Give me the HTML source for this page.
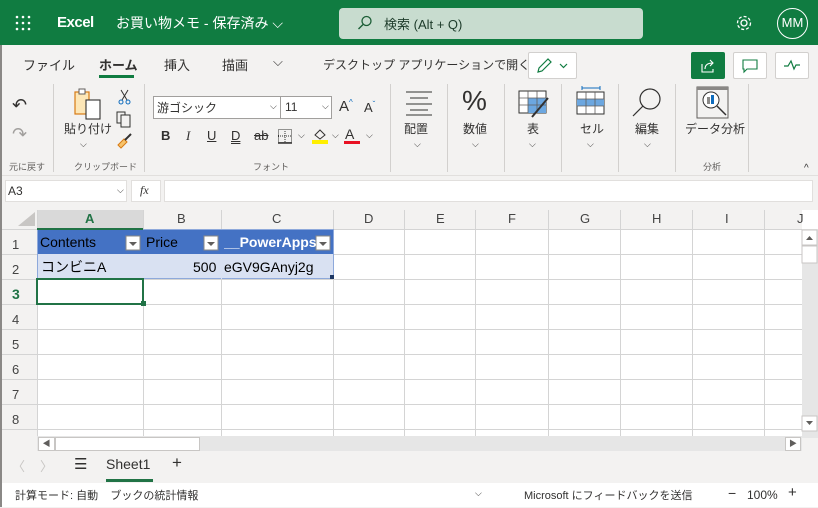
<!DOCTYPE html>
<html><head><meta charset="utf-8"><style>
*{margin:0;padding:0;box-sizing:border-box}
body{width:818px;height:507px;overflow:hidden;position:relative;background:#f3f2f1;font-family:"Liberation Sans","Noto Sans CJK JP",sans-serif;color:#323130}
.a{position:absolute;white-space:nowrap}
.t{font-size:12px}
.vsep{position:absolute;width:1px;background:#d2d0ce}
.lbl{font-size:12px;color:#323130;text-align:center}
.grp{font-size:9px;color:#605e5c}
.chev{font-size:9px;color:#323130}
</style></head><body>
<div class="a" style="left:0;top:0;width:818px;height:45px;background:#107c41"></div>
<svg class="a" style="left:15px;top:15px" width="16" height="16"><g fill="#fff"><circle cx="2" cy="2" r="1.3"/><circle cx="8" cy="2" r="1.3"/><circle cx="14" cy="2" r="1.3"/><circle cx="2" cy="8" r="1.3"/><circle cx="8" cy="8" r="1.3"/><circle cx="14" cy="8" r="1.3"/><circle cx="2" cy="14" r="1.3"/><circle cx="8" cy="14" r="1.3"/><circle cx="14" cy="14" r="1.3"/></g></svg>
<div class="a" style="left:57px;top:14px;color:#fff;font-size:15px;font-weight:bold;letter-spacing:-0.5px">Excel</div>
<div class="a" style="left:116px;top:13px;color:#fff;font-size:14px">お買い物メモ - 保存済み ⌵</div>
<div class="a" style="left:339px;top:8px;width:304px;height:31px;background:#c8dccf;border-radius:4px"></div>
<svg class="a" style="left:357px;top:15px" width="16" height="16"><circle cx="9.5" cy="6" r="4.5" fill="none" stroke="#1b5e36" stroke-width="1.3"/><path d="M6.3 9.3 L1.5 14" stroke="#1b5e36" stroke-width="1.4"/></svg>
<div class="a" style="left:384px;top:14px;font-size:13px;color:#1d3b2a">検索 (Alt + Q)</div>
<svg class="a" style="left:735px;top:14px" width="18" height="18"><circle cx="9" cy="9" r="3" fill="none" stroke="#fff" stroke-width="1.3"/><circle cx="9" cy="9" r="6.5" fill="none" stroke="#fff" stroke-width="1.3" stroke-dasharray="3 2"/></svg>
<div class="a" style="left:777px;top:8px;width:31px;height:31px;border:1.5px solid #fff;border-radius:50%;color:#fff;font-size:13px;text-align:center;line-height:28px">MM</div>
<div class="a" style="left:0;top:45px;width:2px;height:462px;background:#8a8886"></div>
<div class="a" style="left:23px;top:55px;font-size:13px">ファイル</div>
<div class="a" style="left:99px;top:55px;font-size:13px;font-weight:bold">ホーム</div>
<div class="a" style="left:99px;top:75px;width:35px;height:3px;background:#107c41"></div>
<div class="a" style="left:164px;top:55px;font-size:13px">挿入</div>
<div class="a" style="left:222px;top:55px;font-size:13px">描画</div>
<div class="a" style="left:273px;top:54px;font-size:13px">⌵</div>
<div class="a" style="left:323px;top:56px;font-size:12px">デスクトップ アプリケーションで開く</div>
<div class="a" style="left:528px;top:52px;width:49px;height:27px;background:#fff;border:1px solid #d2d0ce;border-radius:2px"></div>
<svg class="a" style="left:535px;top:57px" width="36" height="18"><path d="M3 15 L4 11 L13 2 L16 5 L7 14 Z" fill="none" stroke="#107c41" stroke-width="1.2"/><path d="M25 7 L28.5 10.5 L32 7" fill="none" stroke="#107c41" stroke-width="1.2"/></svg>
<div class="a" style="left:691px;top:52px;width:34px;height:27px;background:#107c41;border-radius:2px"></div>
<svg class="a" style="left:699px;top:57px" width="18" height="18"><path d="M3 7 V15 H14 V12" fill="none" stroke="#fff" stroke-width="1.1"/><path d="M6 12 C6 8 9 6 14 6 M11 3 L14 6 L11 9" fill="none" stroke="#fff" stroke-width="1.1"/></svg>
<div class="a" style="left:733px;top:52px;width:34px;height:27px;background:#fff;border:1px solid #d2d0ce;border-radius:2px"></div>
<svg class="a" style="left:741px;top:57px" width="18" height="18"><path d="M2 3 H16 V12 H6 L3 15 V12 H2 Z" fill="none" stroke="#107c41" stroke-width="1.1"/></svg>
<div class="a" style="left:775px;top:52px;width:34px;height:27px;background:#fff;border:1px solid #d2d0ce;border-radius:2px"></div>
<svg class="a" style="left:783px;top:58px" width="18" height="14"><path d="M1 8 H5 L8 3 L11 11 L13 7 H17" fill="none" stroke="#107c41" stroke-width="1.2"/></svg>
<div class="vsep" style="left:53px;top:84px;height:88px"></div>
<div class="vsep" style="left:144px;top:84px;height:88px"></div>
<div class="vsep" style="left:390px;top:84px;height:88px"></div>
<div class="vsep" style="left:447px;top:84px;height:88px"></div>
<div class="vsep" style="left:504px;top:84px;height:88px"></div>
<div class="vsep" style="left:561px;top:84px;height:88px"></div>
<div class="vsep" style="left:618px;top:84px;height:88px"></div>
<div class="vsep" style="left:675px;top:84px;height:88px"></div>
<div class="vsep" style="left:748px;top:84px;height:88px"></div>
<div class="a" style="left:12px;top:95px;font-size:18px">↶</div>
<div class="a" style="left:12px;top:124px;font-size:18px;color:#a19f9d">↷</div>
<div class="a grp" style="left:9px;top:160px">元に戻す</div>
<svg class="a" style="left:70px;top:86px" width="36" height="36"><rect x="5" y="6" width="14" height="22" fill="#fde7b7" stroke="#d87b14" stroke-width="1.2"/><rect x="9" y="3" width="6" height="5" fill="#fff" stroke="#605e5c"/><rect x="16" y="14" width="14" height="19" fill="#fff" stroke="#323130" stroke-width="1.1"/></svg>
<div class="a" style="left:64px;top:120px;font-size:12px">貼り付け</div>
<div class="a chev" style="left:80px;top:139px">⌵</div>
<svg class="a" style="left:117px;top:88px" width="16" height="18"><path d="M4 2 L10 12 M11 2 L5 12" stroke="#323130"/><circle cx="4" cy="14" r="2" fill="none" stroke="#0f6cbd"/><circle cx="11" cy="14" r="2" fill="none" stroke="#0f6cbd"/></svg>
<svg class="a" style="left:116px;top:110px" width="16" height="18"><rect x="1" y="2" width="8" height="11" fill="none" stroke="#323130"/><rect x="5" y="5" width="9" height="12" fill="#f3f2f1" stroke="#323130"/></svg>
<svg class="a" style="left:116px;top:133px" width="18" height="16"><path d="M2 12 L8 6 L11 9 L5 15 Z" fill="#f7c36a" stroke="#d87b14"/><path d="M9 7 L15 1" stroke="#323130" stroke-width="2"/></svg>
<div class="a grp" style="left:74px;top:160px">クリップボード</div>
<div class="a" style="left:153px;top:96px;width:128px;height:23px;background:#fff;border:1px solid #a19f9d"></div>
<div class="a" style="left:157px;top:99px;font-size:12px">游ゴシック</div>
<div class="a chev" style="left:270px;top:101px">⌵</div>
<div class="a" style="left:280px;top:96px;width:52px;height:23px;background:#fff;border:1px solid #a19f9d"></div>
<div class="a" style="left:285px;top:100px;font-size:12px">11</div>
<div class="a chev" style="left:322px;top:101px">⌵</div>
<div class="a" style="left:339px;top:98px;font-size:15px">A<span style="font-size:8px;color:#0f6cbd;vertical-align:top">^</span></div>
<div class="a" style="left:364px;top:100px;font-size:13px">A<span style="font-size:8px;color:#0f6cbd;vertical-align:top">ˇ</span></div>
<div class="a" style="left:161px;top:128px;font-size:13px;font-weight:bold">B</div>
<div class="a" style="left:186px;top:128px;font-size:13px;font-style:italic;font-family:'Liberation Serif',serif">I</div>
<div class="a" style="left:207px;top:128px;font-size:13px;text-decoration:underline">U</div>
<div class="a" style="left:231px;top:128px;font-size:13px;text-decoration:underline double">D</div>
<div class="a" style="left:254px;top:128px;font-size:13px;text-decoration:line-through">ab</div>
<svg class="a" style="left:277px;top:128px" width="16" height="16"><rect x="1.5" y="1.5" width="13" height="13" fill="none" stroke="#323130" stroke-dasharray="1 1"/><path d="M8 1 V15 M1 8 H15" stroke="#323130" stroke-dasharray="1 1"/><path d="M1 15 H15" stroke="#323130" stroke-width="1.5"/></svg>
<div class="a chev" style="left:298px;top:130px">⌵</div>
<svg class="a" style="left:311px;top:126px" width="18" height="18"><path d="M4 9 L9 4 L14 9 L9 13 Z" fill="none" stroke="#323130"/><rect x="1" y="14" width="16" height="4" fill="#ffef00"/></svg>
<div class="a chev" style="left:332px;top:130px">⌵</div>
<div class="a" style="left:345px;top:126px;font-size:14px">A</div>
<div class="a" style="left:344px;top:141px;width:16px;height:3px;background:#e81123"></div>
<div class="a chev" style="left:366px;top:130px">⌵</div>
<div class="a grp" style="left:253px;top:160px">フォント</div>
<svg class="a" style="left:404px;top:90px" width="30" height="26"><path d="M2 2 H28 M6 8 H24 M2 14 H28 M6 20 H24 M2 25 H28" stroke="#323130" stroke-width="1"/></svg>
<div class="a lbl" style="left:404px;top:120px">配置</div>
<div class="a chev" style="left:414px;top:139px">⌵</div>
<div class="a" style="left:462px;top:85px;font-size:28px;font-weight:300">%</div>
<div class="a lbl" style="left:463px;top:120px">数値</div>
<div class="a chev" style="left:472px;top:139px">⌵</div>
<svg class="a" style="left:518px;top:90px" width="32" height="30"><rect x="1" y="1" width="27" height="22" fill="#fff" stroke="#323130"/><rect x="10" y="8" width="18" height="15" fill="#6ca7e0"/><path d="M1 8 H28 M1 15 H28 M10 1 V23 M19 1 V23" stroke="#605e5c" stroke-width="0.8"/><path d="M14 27 L30 8" stroke="#323130" stroke-width="2"/></svg>
<div class="a lbl" style="left:527px;top:120px">表</div>
<div class="a chev" style="left:529px;top:139px">⌵</div>
<svg class="a" style="left:576px;top:86px" width="30" height="30"><path d="M6 2 H24 M6 0 V4 M24 0 V4" stroke="#0f6cbd"/><rect x="1" y="6" width="27" height="22" fill="#fff" stroke="#323130"/><rect x="1" y="13" width="27" height="7" fill="#6ca7e0"/><path d="M1 13 H28 M1 20 H28 M10 6 V28 M19 6 V28" stroke="#605e5c" stroke-width="0.8"/></svg>
<div class="a lbl" style="left:580px;top:120px">セル</div>
<div class="a chev" style="left:587px;top:139px">⌵</div>
<svg class="a" style="left:631px;top:87px" width="32" height="32"><circle cx="19" cy="12" r="10" fill="none" stroke="#323130" stroke-width="1.2"/><path d="M12 19 L2 29" stroke="#323130" stroke-width="1.2"/></svg>
<div class="a lbl" style="left:635px;top:120px">編集</div>
<div class="a chev" style="left:644px;top:139px">⌵</div>
<svg class="a" style="left:696px;top:86px" width="34" height="34"><rect x="1" y="1" width="31" height="31" fill="#f3f2f1" stroke="#605e5c"/><rect x="1" y="1" width="31" height="3" fill="#8a8886"/><circle cx="15" cy="14" r="8" fill="#fff" stroke="#323130"/><rect x="11" y="11" width="3" height="7" fill="#8a8886"/><rect x="15" y="9" width="3" height="9" fill="#0f6cbd"/><path d="M21 20 L30 29" stroke="#323130" stroke-width="1.5"/></svg>
<div class="a lbl" style="left:685px;top:120px">データ分析</div>
<div class="a grp" style="left:703px;top:160px">分析</div>
<div class="a" style="left:804px;top:163px;font-size:10px">^</div>
<div class="a" style="left:2px;top:175px;width:816px;height:1px;background:#e1dfdd"></div>
<div class="a" style="left:5px;top:180px;width:122px;height:22px;background:#fff;border:1px solid #e1dfdd"></div>
<div class="a" style="left:8px;top:184px;font-size:12px">A3</div>
<div class="a chev" style="left:117px;top:185px">⌵</div>
<div class="a" style="left:131px;top:180px;width:30px;height:22px;background:#fff;border:1px solid #e1dfdd"></div>
<div class="a" style="left:140px;top:183px;font-size:12px;font-style:italic;font-family:'Liberation Serif',serif">fx</div>
<div class="a" style="left:164px;top:180px;width:649px;height:22px;background:#fff;border:1px solid #e1dfdd"></div>
<svg class="a" style="left:2px;top:210px" width="816" height="228">
<rect x="0" y="0" width="816" height="228" fill="#fff"/>
<rect x="0" y="0" width="800" height="19" fill="#f3f2f1"/>
<rect x="0" y="0" width="35" height="228" fill="#f3f2f1"/>
<rect x="35" y="0" width="106" height="19" fill="#d9d9d9"/>
<path d="M16 16 L33 16 L33 2 Z" fill="#c8c6c4"/>
<g stroke="#d4d4d4" stroke-width="1">
<path d="M35.5 0 V228 M141.5 0 V228 M219.5 0 V228 M331.5 0 V228 M402.5 0 V228 M473.5 0 V228 M546.5 0 V228 M618.5 0 V228 M690.5 0 V228 M762.5 0 V228"/>
<path d="M0 19.5 H800 M0 44.5 H800 M0 69.5 H800 M0 94.5 H800 M0 119.5 H800 M0 144.5 H800 M0 169.5 H800 M0 194.5 H800 M0 219.5 H800"/>
</g>
<rect x="35" y="19" width="297" height="25" fill="#4472c4"/>
<rect x="35" y="44" width="297" height="25" fill="#d9e1f2"/>
<rect x="35.5" y="19.5" width="296" height="49" fill="none" stroke="#8ea9db"/>
<path d="M141.5 44 V69 M219.5 44 V69" stroke="#d9e1f2"/>
<rect x="35" y="18" width="106" height="2" fill="#217346"/>
<rect x="35" y="69" width="106" height="25" fill="none" stroke="#217346" stroke-width="2"/>
<rect x="139" y="91" width="5" height="5" fill="#217346"/>
<rect x="328" y="65" width="4" height="4" fill="#1f3864"/>
<g fill="#fff" stroke="#8a8886"><rect x="124" y="26" width="14" height="14"/><rect x="202" y="26" width="14" height="14"/><rect x="314" y="26" width="14" height="14"/></g>
<g fill="#605e5c"><path d="M127 32 H135 L131 36 Z"/><path d="M205 32 H213 L209 36 Z"/><path d="M317 32 H325 L321 36 Z"/></g>
<rect x="800" y="19" width="16" height="209" fill="#e6e6e6"/>
<rect x="800" y="20" width="15" height="15" fill="#fff" stroke="#c8c6c4"/>
<path d="M804 30 H811 L807.5 26 Z" fill="#605e5c"/>
<rect x="800" y="36" width="15" height="17" fill="#fff" stroke="#c8c6c4"/>
<rect x="800" y="206" width="15" height="15" fill="#fff" stroke="#c8c6c4"/>
<path d="M804 211 H811 L807.5 215 Z" fill="#605e5c"/>
</svg>
<div class="a" style="left:2px;top:438px;width:816px;height:70px;background:#f3f2f1"></div>
<div class="a" style="left:37px;top:436px;width:765px;height:15px;background:#e6e6e6"></div>
<div class="a" style="left:38px;top:437px;width:17px;height:14px;background:#fff;border:1px solid #c8c6c4;font-size:8px;color:#605e5c;text-align:center;line-height:12px">◀</div>
<div class="a" style="left:55px;top:437px;width:145px;height:14px;background:#fff;border:1px solid #c8c6c4"></div>
<div class="a" style="left:785px;top:437px;width:16px;height:14px;background:#fff;border:1px solid #c8c6c4;font-size:8px;color:#605e5c;text-align:center;line-height:12px">▶</div>
<div class="a" style="left:2px;top:210px;width:816px;height:19px;font-size:13px;color:#444">
<span class="a" style="left:83px;top:1px;color:#217346;font-weight:bold">A</span>
<span class="a" style="left:175px;top:1px">B</span>
<span class="a" style="left:270px;top:1px">C</span>
<span class="a" style="left:362px;top:1px">D</span>
<span class="a" style="left:434px;top:1px">E</span>
<span class="a" style="left:506px;top:1px">F</span>
<span class="a" style="left:578px;top:1px">G</span>
<span class="a" style="left:650px;top:1px">H</span>
<span class="a" style="left:723px;top:1px">I</span>
<span class="a" style="left:795px;top:1px">J</span>
</div>
<div class="a" style="left:12px;top:237px;font-size:13px;color:#444">1</div>
<div class="a" style="left:12px;top:262px;font-size:13px;color:#444">2</div>
<div class="a" style="left:12px;top:286px;font-size:14px;color:#217346;font-weight:bold">3</div>
<div class="a" style="left:12px;top:312px;font-size:13px;color:#444">4</div>
<div class="a" style="left:12px;top:337px;font-size:13px;color:#444">5</div>
<div class="a" style="left:12px;top:362px;font-size:13px;color:#444">6</div>
<div class="a" style="left:12px;top:387px;font-size:13px;color:#444">7</div>
<div class="a" style="left:12px;top:412px;font-size:13px;color:#444">8</div>
<div class="a" style="left:40px;top:234px;font-size:14px;color:#000">Contents</div>
<div class="a" style="left:146px;top:234px;font-size:14px;color:#000">Price</div>
<div class="a" style="left:224px;top:234px;width:92px;overflow:hidden;font-size:14px;color:#fff;font-weight:bold">__PowerApps</div>
<div class="a" style="left:41px;top:257px;font-size:14px;color:#000">コンビニA</div>
<div class="a" style="left:193px;top:259px;font-size:14px;color:#000">500</div>
<div class="a" style="left:224px;top:259px;font-size:14px;color:#000">eGV9GAnyj2g</div>
<div class="a" style="left:12px;top:456px;font-size:13px;color:#c8c6c4">〈</div>
<div class="a" style="left:40px;top:456px;font-size:13px;color:#c8c6c4">〉</div>
<div class="a" style="left:74px;top:455px;font-size:15px">☰</div>
<div class="a" style="left:106px;top:456px;font-size:14px;color:#323130">Sheet1</div>
<div class="a" style="left:106px;top:479px;width:47px;height:3px;background:#217346"></div>
<div class="a" style="left:172px;top:453px;font-size:17px;font-weight:300">+</div>
<div class="a" style="left:2px;top:483px;width:816px;height:24px;background:#fff"></div>
<div class="a" style="left:15px;top:487px;font-size:11px">計算モード: 自動&nbsp;&nbsp;&nbsp;&nbsp;ブックの統計情報</div>
<div class="a" style="left:475px;top:488px;font-size:9px">⌵</div>
<div class="a" style="left:524px;top:487px;font-size:11px">Microsoft にフィードバックを送信</div>
<div class="a" style="left:728px;top:485px;font-size:14px">−</div>
<div class="a" style="left:747px;top:488px;font-size:12px">100%</div>
<div class="a" style="left:788px;top:484px;font-size:15px">+</div>
</body></html>
